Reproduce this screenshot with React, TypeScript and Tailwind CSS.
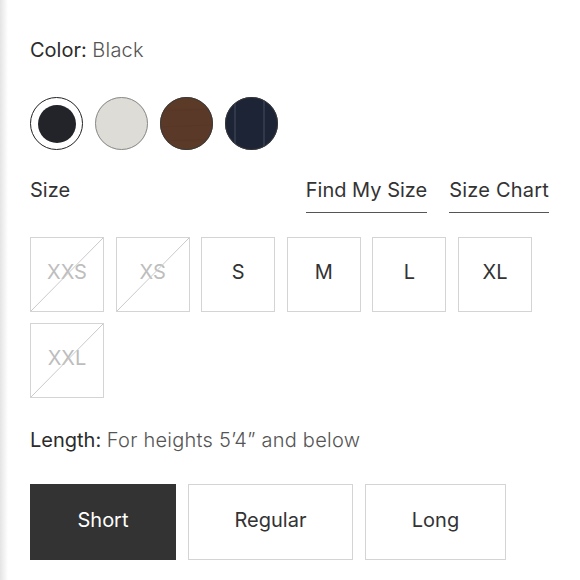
import { useState } from "react";

const sizes = [
    { label: "XXS", available: false },
    { label: "XS", available: false },
    { label: "S", available: true },
    { label: "M", available: true },
    { label: "L", available: true },
    { label: "XL", available: true },
    { label: "XXL", available: false },
];

const lengths = [
    { label: "Short", width: "w-[146px]" },
    { label: "Regular", width: "w-[165px]" },
    { label: "Long", width: "w-[141px]" },
];

function Swatch({ name, selected, onClick }: { name: string; selected: boolean; onClick: () => void }) {
    const fills: Record<string, string> = {
        Black: "#23242a",
        Ivory: "#dddcd6",
        Brown: "#5b3a28",
        Navy: "#1d2435",
    };
    return (
        <button
            onClick={onClick}
            className={`w-[53px] h-[53px] rounded-full flex items-center justify-center shrink-0 ${
                selected ? "border border-[#222]" : ""
            }`}
        >
            <svg
                width={selected ? 38 : 53}
                height={selected ? 38 : 53}
                viewBox="0 0 53 53"
                className="block"
            >
                <defs>
                    <clipPath id={`clip-${name}`}>
                        <circle cx="26.5" cy="26.5" r="26.5" />
                    </clipPath>
                </defs>
                <circle cx="26.5" cy="26.5" r="26.5" fill={fills[name]} />
                {name === "Navy" && (
                    <g clipPath={`url(#clip-${name})`} stroke="#5a6072" strokeWidth="0.7">
                        <line x1="10" y1="0" x2="10" y2="53" />
                        <line x1="39" y1="0" x2="39" y2="53" />
                    </g>
                )}
                {name === "Brown" && (
                    <g clipPath={`url(#clip-${name})`} stroke="#4a2e1f" strokeWidth="0.5" opacity="0.35">
                        <line x1="0" y1="14" x2="53" y2="12" />
                        <line x1="0" y1="30" x2="53" y2="28" />
                        <line x1="0" y1="44" x2="53" y2="42" />
                    </g>
                )}
                {!selected && (
                    <circle
                        cx="26.5"
                        cy="26.5"
                        r="26"
                        fill="none"
                        stroke={name === "Ivory" ? "#8a8a8a" : "#3a3a3a"}
                        strokeWidth="1"
                    />
                )}
            </svg>
        </button>
    );
}

export default function App() {
    const [color, setColor] = useState("Black");
    const [size, setSize] = useState<string | null>(null);
    const [length, setLength] = useState("Short");

    return (
        <div className="flex w-[580px] h-[580px] bg-white overflow-hidden font-['Inter','Liberation_Sans',sans-serif]">
            <div className="w-[8px] shrink-0 bg-gradient-to-r from-[#e4e4e4] to-white" />
            <div className="flex-1 pl-[22px] pr-[31px] pt-[38px]">
                <p className="text-[20px] leading-[24px] text-[#2b2b2b]">
                    Color: <span className="font-light tracking-[0.2px] text-[#555]">{color}</span>
                </p>

                <div className="flex gap-[12px] mt-[35px]">
                    {["Black", "Ivory", "Brown", "Navy"].map((c) => (
                        <Swatch key={c} name={c} selected={color === c} onClick={() => setColor(c)} />
                    ))}
                </div>

                <div className="flex items-start mt-[28px]">
                    <span className="text-[20px] leading-[24px] text-[#333]">Size</span>
                    <button className="ml-auto text-[20px] leading-[24px] text-[#333] pb-[10px] border-b-[1.5px] border-[#555]">
                        Find My Size
                    </button>
                    <button className="ml-[22px] text-[20px] leading-[24px] text-[#333] pb-[10px] border-b-[1.5px] border-[#555] tracking-[0.2px]">
                        Size Chart
                    </button>
                </div>

                <div className="flex flex-wrap gap-x-[11.6px] gap-y-[11px] mt-[24px] w-[510px]">
                    {sizes.map((s) => (
                        <button
                            key={s.label}
                            disabled={!s.available}
                            onClick={() => setSize(s.label)}
                            className={`relative w-[74px] h-[75px] flex items-center justify-center pb-[6px] border text-[20px] ${
                                size === s.label ? "border-[#333]" : "border-[#d4d4d4]"
                            } ${s.available ? "text-[#333]" : "text-[#bdbdbd]"}`}
                        >
                            {s.label}
                            {!s.available && (
                                <svg className="absolute inset-0 w-full h-full" viewBox="0 0 74 75" preserveAspectRatio="none">
                                    <line x1="0" y1="75" x2="74" y2="0" stroke="#c8c8c8" strokeWidth="1" />
                                </svg>
                            )}
                        </button>
                    ))}
                </div>

                <p className="mt-[30px] text-[20px] leading-[24px] text-[#2b2b2b]">
                    Length: <span className="font-light tracking-[0.25px] text-[#555]">For heights 5&#8217;4&#8221; and below</span>
                </p>

                <div className="flex gap-[12px] mt-[32px]">
                    {lengths.map((l) => (
                        <button
                            key={l.label}
                            onClick={() => setLength(l.label)}
                            className={`${l.width} h-[76px] text-[20px] pb-[4px] border ${
                                length === l.label
                                    ? "bg-[#333] border-[#333] text-white"
                                    : "bg-white border-[#d4d4d4] text-[#333]"
                            }`}
                        >
                            {l.label}
                        </button>
                    ))}
                </div>
            </div>
        </div>
    );
}
